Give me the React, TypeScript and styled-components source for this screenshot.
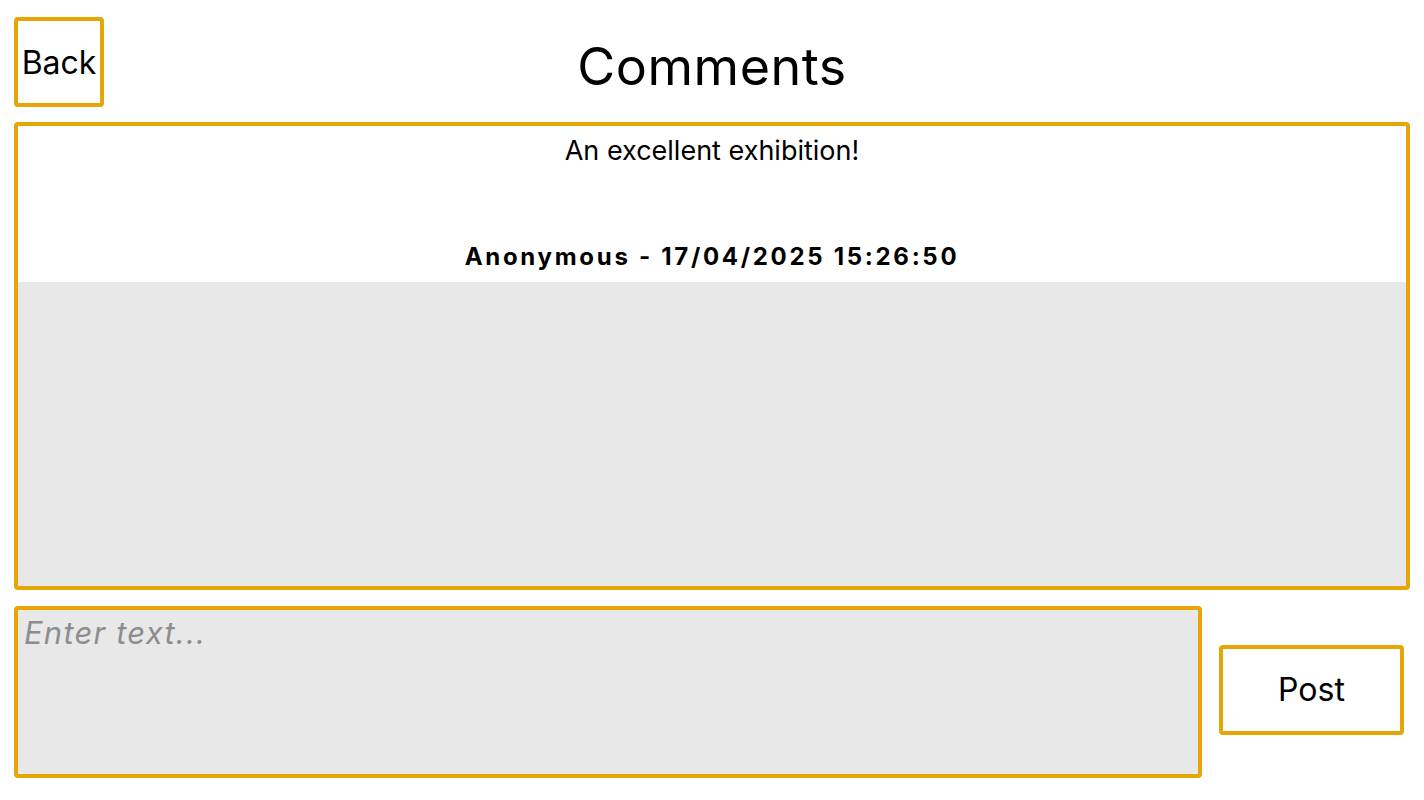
import React from "react";
import styled, { createGlobalStyle } from "styled-components";

const Global = createGlobalStyle`
  html, body { margin: 0; padding: 0; background: #ffffff; }
  body { font-family: Inter, "Noto Sans", sans-serif; color: #000; }
  * { box-sizing: border-box; }
`;

const GOLD = "#e5a606";
const GRAY = "#e9e8e9";

const Page = styled.div`
  width: 1424px;
  height: 800px;
  padding: 17px 14px 22px 14px;
  display: flex;
  flex-direction: column;
  gap: 16px;
`;

const Header = styled.header`
  position: relative;
  height: 89px;
  display: flex;
  align-items: center;
  justify-content: center;
`;

const SketchBox = styled.div`
  border: 4px solid ${GOLD};
  border-radius: 4px;
`;

const BackButton = styled.button`
  position: absolute;
  left: 0;
  top: 0;
  width: 90px;
  height: 90px;
  border: 4px solid ${GOLD};
  border-radius: 4px;
  background: #fff;
  font-family: Inter, sans-serif;
  font-size: 32px;
  color: #000;
  padding: 0;
  cursor: pointer;
`;

const Title = styled.h1`
  margin: 0;
  font-weight: 400;
  font-size: 52px;
  letter-spacing: 0.5px;
  transform: translateY(5px);
`;

const CommentList = styled(SketchBox)`
  height: 468px;
  background: ${GRAY};
  display: flex;
  flex-direction: column;
  overflow: hidden;
`;

const CommentItem = styled.div`
  background: #fff;
  height: 156px;
  display: flex;
  flex-direction: column;
  align-items: center;
  justify-content: space-between;
  padding: 8px 0 11px;
`;

const CommentText = styled.p`
  margin: 0;
  font-size: 27px;
`;

const CommentMeta = styled.p`
  margin: 0;
  font-size: 24px;
  font-weight: 700;
  letter-spacing: 2.7px;
`;

const Composer = styled.div`
  display: flex;
  align-items: center;
  gap: 17px;
`;

const TextArea = styled.textarea`
  width: 1188px;
  height: 172px;
  border: 4px solid ${GOLD};
  border-radius: 4px;
  background: ${GRAY};
  resize: none;
  font-family: Inter, sans-serif;
  font-size: 31px;
  letter-spacing: 1.2px;
  padding: 4px 6px;
  outline: none;
  &::placeholder {
    color: #8e8d8e;
    font-style: italic;
  }
`;

const PostButton = styled.button`
  width: 185px;
  height: 90px;
  margin-bottom: 5px;
  border: 4px solid ${GOLD};
  border-radius: 4px;
  background: #fff;
  font-family: Inter, sans-serif;
  font-size: 32px;
  color: #000;
  cursor: pointer;
`;

export default function App() {
  return (
    <>
      <Global />
      <Page>
        <Header>
          <BackButton>Back</BackButton>
          <Title>Comments</Title>
        </Header>
        <CommentList>
          <CommentItem>
            <CommentText>An excellent exhibition!</CommentText>
            <CommentMeta>Anonymous - 17/04/2025 15:26:50</CommentMeta>
          </CommentItem>
        </CommentList>
        <Composer>
          <TextArea placeholder="Enter text..." />
          <PostButton>Post</PostButton>
        </Composer>
      </Page>
    </>
  );
}
